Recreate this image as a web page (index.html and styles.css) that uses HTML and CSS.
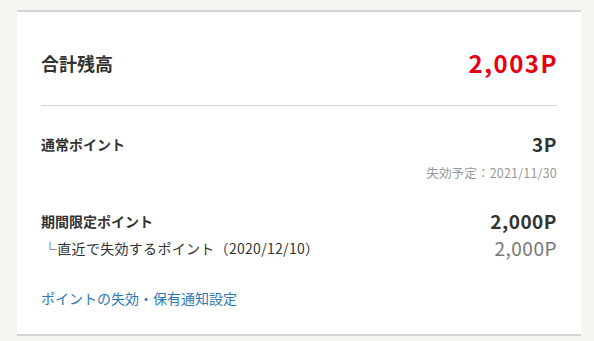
FILE: index.html
```html
<!DOCTYPE html>
<html lang="ja">

<head>
    <meta charset="UTF-8">
    <meta name="viewport" content="width=device-width, initial-scale=1.0">
    <title>ポイント残高</title>
    <link rel="stylesheet" href="styles.css">
</head>

<body>
    <div class="point-card">
        <div class="total-row">
            <h2 class="total-label">合計残高</h2>
            <div class="total-value">2,003P</div>
        </div>

        <div class="point-block">
            <div class="point-row">
                <div class="point-label">通常ポイント</div>
                <div class="point-value">3P</div>
            </div>
            <div class="expire-note">失効予定：2021/11/30</div>
        </div>

        <div class="point-block limited">
            <div class="point-row">
                <div class="point-label">期間限定ポイント</div>
                <div class="point-value">2,000P</div>
            </div>
            <div class="sub-row">
                <div class="sub-label">└直近で失効するポイント（2020/12/10）</div>
                <div class="sub-value">2,000P</div>
            </div>
        </div>

        <a class="setting-link" href="#">ポイントの失効・保有通知設定</a>
    </div>
</body>

</html>
```

FILE: styles.css
```css
:root {
    --bg-color: #f6f5f2;
    --card-border: #d3d3d3;
    --text-color: #333333;
    --sub-text: #999999;
    --red-color: #e60012;
    --link-color: #2b78b8;
}

* {
    margin: 0;
    padding: 0;
    box-sizing: border-box;
}

body {
    font-family: "Noto Sans CJK JP", "Noto Sans", sans-serif;
    background-color: var(--bg-color);
    color: var(--text-color);
    padding: 10px 13px 5px 17px;
}

.point-card {
    background: #fff;
    border-top: 2px solid var(--card-border);
    border-bottom: 2px solid var(--card-border);
    padding: 0 24px 26px;
}

.total-row {
    display: flex;
    justify-content: space-between;
    align-items: center;
    height: 94px;
    padding-top: 9px;
    border-bottom: 1px solid var(--card-border);
}

.total-label {
    font-size: 18px;
    font-weight: bold;
    line-height: 32px;
}

.total-value {
    font-size: 24px;
    font-weight: bold;
    line-height: 32px;
    color: var(--red-color);
    letter-spacing: 1.5px;
    margin-right: -1px;
}

.point-block {
    padding-top: 26px;
}

.point-block.limited {
    padding-top: 27px;
}

.point-row,
.sub-row {
    display: flex;
    justify-content: space-between;
    align-items: center;
    line-height: 24px;
}

.point-label {
    font-size: 14px;
    font-weight: bold;
}

.point-value {
    font-size: 19px;
    font-weight: bold;
    letter-spacing: 0.5px;
}

.expire-note {
    margin-top: 8px;
    text-align: right;
    font-size: 12.5px;
    line-height: 18px;
    color: var(--sub-text);
    letter-spacing: 0.2px;
}

.sub-row {
    margin-top: 3px;
}

.sub-label {
    font-size: 14px;
    padding-left: 2px;
    letter-spacing: 0.3px;
}

.sub-value {
    font-size: 19px;
    color: #777;
    letter-spacing: 0.5px;
}

.setting-link {
    display: block;
    margin-top: 28px;
    font-size: 14px;
    line-height: 20px;
    color: var(--link-color);
    text-decoration: none;
}
```
